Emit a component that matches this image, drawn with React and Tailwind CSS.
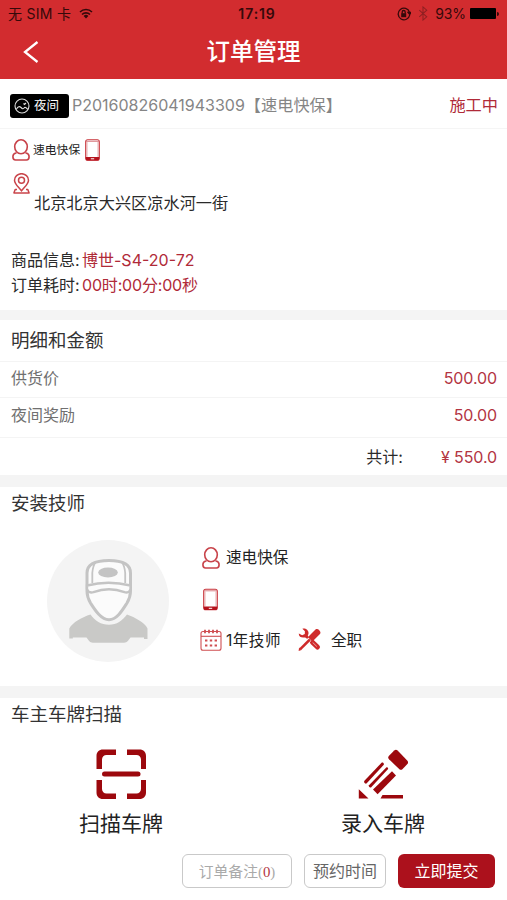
import React from "react";

const PersonIcon = ({ className }) => (
  <svg viewBox="0 0 18 22" className={className} fill="none" stroke="#c8434a" strokeWidth="1.600" strokeLinecap="round" strokeLinejoin="round">
    <ellipse cx="9" cy="7.800" rx="6.300" ry="7" />
    <path d="M4 14C2 14.300.9 15.800.9 17.800c0 2 .8 3.200 2.600 3.200h11c1.800 0 2.600-1.200 2.600-3.200 0-2-1.100-3.500-3.100-3.800" />
  </svg>
);

const PhoneIcon = ({ className }) => (
  <svg viewBox="0 0 15 22" className={className}>
    <rect x="0.700" y="0.700" width="13.600" height="20.600" rx="2" fill="#fff" stroke="#c8333a" strokeWidth="1.100" />
    <path d="M1 2.300h13" stroke="#d98085" strokeWidth="1" />
    <path d="M.7 18h13.600v1.500a2 2 0 0 1-2 2H2.700a2 2 0 0 1-2-2z" fill="#b5121c" />
    <path d="M5.800 19.800h3.400" stroke="#fff" strokeWidth="1" />
    <path d="M2 3v14.800M13 3v14.800" stroke="#dc8d91" strokeWidth=".7" />
  </svg>
);

const PinIcon = () => (
  <svg viewBox="0 0 17 21" className="h-[21px] w-[17px]" fill="none" stroke="#c9444a" strokeWidth="1.500">
    <path d="M8.500 17.800C5 13.500 1.500 10.800 1.500 7.200a7 6.500 0 0 1 14 0c0 3.600-3.500 6.300-7 10.600z" />
    <circle cx="8.500" cy="7.200" r="3" />
    <path d="M4 16.400H2.200L.9 19.900h15.200l-1.300-3.500H13" strokeLinejoin="round" />
  </svg>
);

const CalendarIcon = () => (
  <svg viewBox="0 0 22 22" className="h-[22px] w-[22px]" fill="none" stroke="#cf4f52" strokeWidth="1.100">
    <rect x="1" y="2.500" width="20" height="18.800" rx="2" />
    <path d="M1 7.300h20" />
    <path d="M5 .8v3.400M9 .8v3.400M13 .8v3.400M17 .8v3.400" strokeWidth="1.800" />
    <path d="M5 11.500h2.400M9.800 11.500h2.400M14.600 11.500h2.400M5 16.500h2.400M9.800 16.500h2.400M14.600 16.500h2.400" strokeWidth="2.200" />
  </svg>
);

const ToolsIcon = () => (
  <svg viewBox="0 0 22 22" className="h-[23px] w-[23px]">
    <path d="m7.500 7.500 5 5" stroke="#cf2b2b" strokeWidth="2.600" />
    <path d="M.8 5.200 4 7l2.500-1.200L6.600 3 4.200.6c3.200-.8 6.400 1.600 5.800 5l-.6 1.800-1.800 1.800L6.300 9C3.300 9.800.4 8 .8 5.200z" fill="#cf2b2b" />
    <path d="m13.800 13.600 4.800 4.600" stroke="#cf2b2b" strokeWidth="4.800" strokeLinecap="round" />
    <path d="m14 13.800 4 3.900" stroke="#eba9a8" strokeWidth=".9" />
    <path d="m4.500 17.500 7-7" stroke="#fff" strokeWidth="4" />
    <path d="m2.200 20.200 9.200-9.200" stroke="#cf2b2b" strokeWidth="2.400" />
    <path d="m9.600 8.600 7.400-7.400c1.900-1.500 5.500 2.100 4.200 4.200l-7.400 7.400z" fill="#cf2b2b" />
    <path d="m1 18.600 2.400 2.400-2.800 1z" fill="#cf2b2b" />
  </svg>
);

const Avatar = () => (
  <svg viewBox="0 0 122 122" className="h-[122px] w-[122px]">
    <circle cx="61" cy="61" r="61" fill="#f4f4f4" />
    <path d="M22.300 98.500V88.500c3-6 13-11.500 21.200-14C48 81 54 84.800 62 84.800S75 81 80 74.500c8 3 18 8 20.500 14V99H97v-1.500H83.500c-2 2.500-3 5.200-6.500 5.200H46c-3.500 0-4.500-2.700-6.500-5.200H25.800v1z" fill="#c9c9c7" />
    <path d="M40 43V33c0-9 9.500-12.500 22-12.500S83.500 24 83.500 33v18c0 4-1.200 8-3.500 12-4.500 7-10 16.700-18 16.700S48 70 43.500 63C41.200 59 40 55 40 51z" fill="#fbfbfb" stroke="#c4c4c4" strokeWidth="3" />
    <path d="M40 45.500c14-3.600 29-3.600 43.500 0V49c-.8 2.800-3 4.200-6 3.200-10-3.800-21-3.800-31 0-3.500 1-5.700-.4-6.500-3.200z" fill="#fbfbfb" stroke="#c4c4c4" strokeWidth="2.400" />
    <path d="M45.300 43V33c.4-5 1.200-8 3.200-10.500M78.200 43V33c-.4-5-1.200-8-3.200-10.500" fill="none" stroke="#c4c4c4" strokeWidth="1.800" />
    <ellipse cx="61" cy="32.500" rx="9.800" ry="5" fill="#c4c4c4" />
  </svg>
);

const ScanIcon = () => (
  <svg viewBox="0 0 50 50" className="h-[50px] w-[50px]" fill="#9c080d">
    <path d="M20 .5V6H10.500C8 6 6 8 6 10.500V20H.5V7C.5 3 3 .5 7 .5z" />
    <path d="M31 .5V6h9.500C43 6 45 8 45 10.500V20h5V7c0-4-2.500-6.500-6.500-6.500z" />
    <path d="M20 50v-5.500h-9.500C8 44.500 6 42.500 6 40v-9H.5v12.500C.5 47.500 3 50 7 50z" />
    <path d="M31 50v-5.500h9.500c2.500 0 4.500-2 4.500-4.500v-9h5v12.500c0 4-2.500 6.500-6.500 6.500z" />
    <rect x="6" y="22.500" width="38.500" height="5" rx="2.500" />
  </svg>
);

const PencilIcon = () => (
  <svg viewBox="0 0 50 50" className="h-[50px] w-[50px]" fill="#9c080d">
    <path d="M36.200 1.400c1.200-1 2.400-.9 3.400.1l9.600 10c1 1.200 1.100 2.300.2 3.400l-5 5.300c-1 .9-2 .8-3 0L31 10.300c-1-1-1-2.300-.2-3.300z" />
    <path d="M23.800 13.600c1.400-.4 2.400.8 2 2.200L8.500 34.500c-1.600.6-2.700-.8-2.300-2.400z" />
    <path d="M28.500 18.200c1.200-.2 1.900.7 1.600 1.900L13 38.400c-1.500.4-2.500-.6-2-2.100z" />
    <path d="m34 22.200 4 4.200-18.400 18.800-4.600-4.700z" />
    <path d="M.8 40.300 10.500 49.400H.8zM24.500 46H45V49.400H22.500z" />
  </svg>
);

const StatusBar = () => (
  <div className="flex h-[27px] items-center px-2 text-[14px] text-[#35090a]">
    <div className="flex flex-1 items-center">
      <span className="tracking-[0.280px]">无 SIM 卡</span>
      <svg viewBox="0 0 14 11" className="ml-[8px] h-[11px] w-[14px]" fill="none" stroke="#35090a" strokeWidth="1.600">
        <path d="M1 4a8.500 8.500 0 0 1 12 0M3 6.500a5.800 5.800 0 0 1 8 0" />
        <path d="M4.600 8a3.500 3.500 0 0 1 4.800 0L7 10.500z" fill="#35090a" stroke="none" />
      </svg>
    </div>
    <span className="-mr-[7px] text-[14px] font-semibold tracking-[0.900px]">17:19</span>
    <div className="flex flex-1 items-center justify-end">
      <svg viewBox="0 0 14 14" className="h-[14px] w-[14px]" fill="none" stroke="#35090a" strokeWidth="1.300">
        <path d="M12.500 5.200A5.800 5.800 0 1 0 12.700 8M11 5.500h3l-1.300 2z" />
        <rect x="4.200" y="6.200" width="5" height="4" fill="#35090a" stroke="none" />
        <path d="M5.200 6.500V5a1.500 1.500 0 0 1 3 0v1.500" />
      </svg>
      <svg viewBox="0 0 10 16" className="ml-[7px] h-[15px] w-[10px]" fill="none" stroke="#8f2022" strokeWidth="1.100">
        <path d="m1 4.500 8 7L5 15V1l4 3.500-8 7" />
      </svg>
      <span className="ml-[7px] tracking-[-0.100px]">93%</span>
      <span className="ml-[4px] h-[11px] w-[26px] rounded-[1px] bg-black" />
      <span className="ml-[1px] h-[4px] w-[2px] rounded-r bg-[#35090a]" />
    </div>
  </div>
);

const PriceRow = ({ label, value, className }) => (
  <div className={`flex items-center justify-between border-b border-[#f4f4f4] pr-[10px] pl-[11px] ${className}`}>
    <span className="text-[16px] text-[#707070]">{label}</span>
    <span className="text-[16px] tracking-[-0.100px] text-[#b33542]">{value}</span>
  </div>
);

const ScanAction = ({ icon, label }) => (
  <div className="flex w-[84px] flex-col items-center">
    {icon}
    <span className="mt-[10px] text-[21px] leading-[30px] whitespace-nowrap text-[#222]">{label}</span>
  </div>
);

export default function App() {
  return (
    <div className="flex h-[900px] w-[507px] flex-col overflow-hidden bg-white font-[Inter,'Noto_Sans_CJK_SC',sans-serif] leading-none whitespace-nowrap">
      <header className="h-[79px] shrink-0 bg-[#d22c2f]">
        <StatusBar />
        <div className="grid h-[50px] grid-cols-[1fr_auto_1fr] items-center">
          <svg viewBox="0 0 16 22" className="ml-[23px] h-[22px] w-[16px]" fill="none" stroke="#fff" strokeWidth="2.300">
            <path d="M14.500 1 2 11l12.500 10" />
          </svg>
          <h1 className="text-[23.500px] font-medium text-white">订单管理</h1>
        </div>
      </header>

      <section className="shrink-0">
        <div className="flex h-[50px] items-center border-b border-[#f5f5f5] pt-[3px] pr-[9px] pl-[10px]">
          <div className="mt-[2px] flex h-[24px] w-[59px] items-center rounded-[3px] bg-black pl-[4px] text-white">
            <svg viewBox="0 0 16 16" className="h-[16px] w-[16px]" fill="none" stroke="#ddd" strokeWidth="1.100">
              <circle cx="8" cy="8" r="7" />
              <path d="M2.500 11c1.500-2.500 3-3 4.500-1.500 1.500 1.500 2 1.800 3 .5s2-.5 3.500 1M9.500 5.500l1 1 1.500-1.500" />
            </svg>
            <span className="ml-[4px] pt-[1px] text-[12.500px]">夜间</span>
          </div>
          <span className="ml-[3px] text-[16px] text-[#858585]">P20160826041943309</span>
          <span className="text-[16.200px] text-[#858585]">【速电快保】</span>
          <span className="ml-auto text-[16.200px] text-[#b02a38]">施工中</span>
        </div>
        <div className="h-[181px] pt-[10px] pl-[11px]">
          <div className="flex h-[22px] items-center">
            <PersonIcon className="ml-[1px] h-[22px] w-[18px]" />
            <span className="ml-[3px] pt-[1px] text-[11.800px] text-[#222]">速电快保</span>
            <PhoneIcon className="ml-[5px] h-[22px] w-[15px]" />
          </div>
          <div className="mt-[12px] flex h-[40px] items-start">
            <div className="ml-[2px]"><PinIcon /></div>
            <span className="mt-[22px] ml-[4px] text-[16.200px] text-[#2a2a2a]">北京北京大兴区凉水河一街</span>
          </div>
          <div className="mt-[34px] flex h-[25px] items-center text-[16px]">
            <span className="w-[71px] text-[#2a2a2a]">商品信息:</span>
            <span className="text-[#b02a38]">博世-S4-20-72</span>
          </div>
          <div className="flex h-[25px] items-center text-[16px]">
            <span className="w-[71px] text-[#2a2a2a]">订单耗时:</span>
            <span className="tracking-[-0.180px] text-[#b02a38]">00时:00分:00秒</span>
          </div>
        </div>
      </section>

      <section className="shrink-0 border-t-[10px] border-[#f4f4f4]">
        <h2 className="flex h-[42px] items-center border-b border-[#f4f4f4] pl-[11px] text-[18.500px] text-[#333]">明细和金额</h2>
        <PriceRow label="供货价" value="500.00" className="h-[36px] pb-[3px]" />
        <PriceRow label="夜间奖励" value="50.00" className="h-[40px] pb-[6px]" />
        <div className="flex h-[37px] items-center justify-end pr-[10px] text-[16px]">
          <span className="text-[#2a2a2a]">共计:</span>
          <span className="ml-[38px] tracking-[-0.100px] text-[#b33542]">¥ 550.0</span>
        </div>
      </section>

      <section className="h-[211px] shrink-0 border-t-[12px] border-[#f4f4f4]">
        <h2 className="flex h-[33px] items-center pl-[11px] text-[18.500px] text-[#333]">安装技师</h2>
        <div className="flex pt-[20px] pl-[47px]">
          <Avatar />
          <div className="ml-[31px] pt-[6px] text-[15.600px] text-[#222]">
            <div className="flex h-[23px] items-center">
              <PersonIcon className="ml-[2px] h-[22px] w-[18px]" />
              <span className="ml-[6px]">速电快保</span>
            </div>
            <div className="mt-[19px] flex h-[23px] items-center">
              <PhoneIcon className="ml-[3px] h-[23px] w-[15px]" />
            </div>
            <div className="mt-[17px] flex h-[23px] items-center">
              <CalendarIcon />
              <span className="ml-[4px] pt-[2px] tracking-[0.450px]">1年技师</span>
              <span className="ml-[17px]"><ToolsIcon /></span>
              <span className="ml-[10px] pt-[2px]">全职</span>
            </div>
          </div>
        </div>
      </section>

      <section className="flex-1 border-t-[12px] border-[#f4f4f4]">
        <h2 className="flex h-[32px] items-center pl-[11px] text-[18.500px] text-[#333]">车主车牌扫描</h2>
        <div className="flex justify-between pt-[19px] pr-[82px] pl-[79px]">
          <ScanAction icon={<ScanIcon />} label="扫描车牌" />
          <ScanAction icon={<PencilIcon />} label="录入车牌" />
        </div>
        <div className="mt-[15px] flex justify-end gap-[12px] pr-[12px]">
          <button className="h-[34px] w-[110px] rounded-[6px] border border-[#c9c9c9] pt-[2px] text-[14.800px] text-[#aaa]">
            订单备注<span className="font-['Liberation_Serif',serif]">(<span className="text-[#b33542]">0</span>)</span>
          </button>
          <button className="h-[34px] w-[82px] rounded-[6px] border border-[#c9c9c9] text-[16px] text-[#666]">预约时间</button>
          <button className="h-[34px] w-[97px] rounded-[6px] bg-[#ac111c] text-[16px] text-white">立即提交</button>
        </div>
      </section>
    </div>
  );
}
